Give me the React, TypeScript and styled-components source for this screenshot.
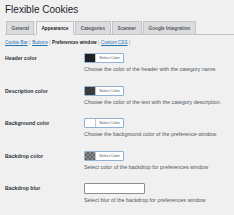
import styled, { createGlobalStyle } from "styled-components";

const GlobalStyle = createGlobalStyle`
  html, body {
    margin: 0;
    padding: 0;
    background: #f0f0f1;
  }
  body {
    font-family: "Liberation Sans", Arial, sans-serif;
    color: #1d2327;
  }
`;

const Page = styled.div`
  width: 234px;
  height: 215px;
  padding: 4px 0 0 5px;
  box-sizing: border-box;
  overflow: hidden;
`;

const Title = styled.h1`
  margin: 0;
  font-size: 10px;
  line-height: 12px;
  font-weight: 400;
  color: #1d2327;
`;

const TabBar = styled.div`
  display: flex;
  gap: 1.5px;
  margin-top: 5px;
  padding-left: 1px;
  border-bottom: 1px solid #c3c4c7;
`;

const Tab = styled.div<{ active?: boolean }>`
  height: 12px;
  padding: 0 4.5px;
  display: flex;
  align-items: center;
  font-size: 4.7px;
  font-weight: 700;
  color: ${(p) => (p.active ? "#1d2327" : "#50575e")};
  background: ${(p) => (p.active ? "#f0f0f1" : "#dcdcde")};
  border: 1px solid #c3c4c7;
  border-bottom: none;
  margin-bottom: ${(p) => (p.active ? "-1px" : "0")};
  ${(p) => (p.active ? "border-bottom: 1px solid #f0f0f1;" : "")}
`;

const SubNav = styled.div`
  margin-top: 5px;
  font-size: 4.6px;
  line-height: 6px;
  color: #8c8f94;
`;

const SubLink = styled.span<{ current?: boolean }>`
  color: ${(p) => (p.current ? "#1d2327" : "#2271b1")};
  font-weight: ${(p) => (p.current ? 700 : 400)};
  text-decoration: ${(p) => (p.current ? "none" : "underline")};
`;

const Sep = styled.span`
  margin: 0 1.6px;
`;

const Form = styled.div`
  margin-top: 7px;
  display: flex;
  flex-direction: column;
`;

const Row = styled.div`
  display: grid;
  grid-template-columns: 79px 1fr;
  height: 32.5px;
`;

const Label = styled.div`
  font-size: 5.2px;
  font-weight: 700;
  line-height: 10px;
  color: #2c3338;
`;

const Field = styled.div`
  display: flex;
  flex-direction: column;
  align-items: flex-start;
`;

const ColorButton = styled.div`
  display: flex;
  width: 40px;
  height: 10px;
  box-sizing: border-box;
  border: 1px solid #8fb2d4;
  border-radius: 1px;
  background: #f6f7f7;
  overflow: hidden;
`;

const Swatch = styled.div<{ kind: "dark" | "grey" | "white" | "checker" }>`
  width: 10px;
  height: 100%;
  border-right: 1px solid #c3c4c7;
  background: ${(p) =>
    p.kind === "dark"
      ? "#1f2124"
      : p.kind === "grey"
      ? "#3a3b3d"
      : p.kind === "white"
      ? "#ffffff"
      : "repeating-conic-gradient(#5e6064 0% 25%, #8a8c90 0% 50%) 0 0 / 4px 4px"};
`;

const ButtonText = styled.div`
  flex: 1;
  display: flex;
  align-items: center;
  justify-content: center;
  font-size: 3.8px;
  color: #50575e;
  background: #fff;
`;

const TextInput = styled.div`
  width: 61px;
  height: 11px;
  box-sizing: border-box;
  border: 1px solid #8c8f94;
  border-radius: 1px;
  background: #fff;
`;

const Description = styled.div`
  margin-top: 3px;
  font-size: 5.4px;
  line-height: 7px;
  color: #50575e;
  white-space: nowrap;
`;

type ColorRow = {
  label: string;
  swatch: "dark" | "grey" | "white" | "checker";
  desc: string;
};

const colorRows: ColorRow[] = [
  {
    label: "Header color",
    swatch: "dark",
    desc: "Choose the color of the header with the category name.",
  },
  {
    label: "Description color",
    swatch: "grey",
    desc: "Choose the color of the text with the category description.",
  },
  {
    label: "Background color",
    swatch: "white",
    desc: "Choose the background color of the preference window.",
  },
  {
    label: "Backdrop color",
    swatch: "checker",
    desc: "Select color of the backdrop for preferences window",
  },
];

const tabs = ["General", "Appearance", "Categories", "Scanner", "Google Integration"];

const App = () => {
  return (
    <Page>
      <GlobalStyle />
      <Title>Flexible Cookies</Title>

      <TabBar>
        {tabs.map((t) => (
          <Tab key={t} active={t === "Appearance"}>
            {t}
          </Tab>
        ))}
      </TabBar>

      <SubNav>
        <SubLink>Cookie Bar</SubLink>
        <Sep>|</Sep>
        <SubLink>Buttons</SubLink>
        <Sep>|</Sep>
        <SubLink current>Preferences window</SubLink>
        <Sep>|</Sep>
        <SubLink>Custom CSS</SubLink>
        <Sep>|</Sep>
      </SubNav>

      <Form>
        {colorRows.map((row) => (
          <Row key={row.label}>
            <Label>{row.label}</Label>
            <Field>
              <ColorButton>
                <Swatch kind={row.swatch} />
                <ButtonText>Select Color</ButtonText>
              </ColorButton>
              <Description>{row.desc}</Description>
            </Field>
          </Row>
        ))}
        <Row>
          <Label>Backdrop blur</Label>
          <Field>
            <TextInput />
            <Description>Select blur of the backdrop for preferences window</Description>
          </Field>
        </Row>
      </Form>
    </Page>
  );
};

export default App;
